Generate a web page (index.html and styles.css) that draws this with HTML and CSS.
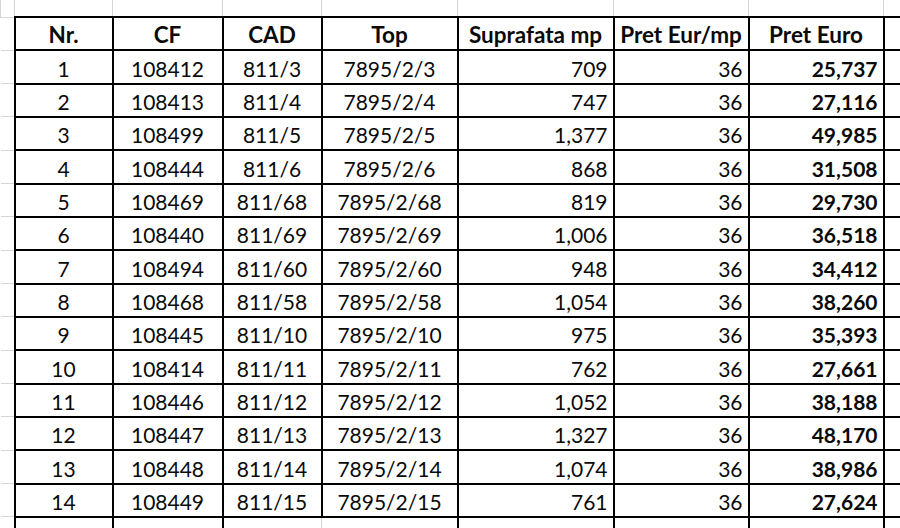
FILE: index.html
```html
<!DOCTYPE html>
<html>
<head>
<meta charset="utf-8">
<link rel="stylesheet" href="styles.css">
</head>
<body>
<table class="sheet">
  <colgroup>
    <col class="c-stub"><col class="c-nr"><col class="c-cf"><col class="c-cad"><col class="c-top"><col class="c-sup"><col class="c-pm"><col class="c-pe"><col class="c-rest">
  </colgroup>
  <tr class="r-top"><td></td><td></td><td></td><td></td><td></td><td></td><td></td><td></td><td></td></tr>
  <tr class="r-head">
    <td class="stub"></td>
    <th>Nr.</th><th>CF</th><th>CAD</th><th>Top</th><th>Suprafata mp</th><th>Pret Eur/mp</th><th>Pret Euro</th>
    <td class="rest"></td>
  </tr>
  <tr><td class="stub"></td><td class="ctr">1</td><td class="ctr">108412</td><td class="ctr">811/3</td><td class="ctr">7895/2/3</td><td class="num">709</td><td class="num">36</td><td class="num b">25,737</td><td class="rest"></td></tr>
  <tr><td class="stub"></td><td class="ctr">2</td><td class="ctr">108413</td><td class="ctr">811/4</td><td class="ctr">7895/2/4</td><td class="num">747</td><td class="num">36</td><td class="num b">27,116</td><td class="rest"></td></tr>
  <tr><td class="stub"></td><td class="ctr">3</td><td class="ctr">108499</td><td class="ctr">811/5</td><td class="ctr">7895/2/5</td><td class="num">1,377</td><td class="num">36</td><td class="num b">49,985</td><td class="rest"></td></tr>
  <tr><td class="stub"></td><td class="ctr">4</td><td class="ctr">108444</td><td class="ctr">811/6</td><td class="ctr">7895/2/6</td><td class="num">868</td><td class="num">36</td><td class="num b">31,508</td><td class="rest"></td></tr>
  <tr><td class="stub"></td><td class="ctr">5</td><td class="ctr">108469</td><td class="ctr">811/68</td><td class="ctr">7895/2/68</td><td class="num">819</td><td class="num">36</td><td class="num b">29,730</td><td class="rest"></td></tr>
  <tr><td class="stub"></td><td class="ctr">6</td><td class="ctr">108440</td><td class="ctr">811/69</td><td class="ctr">7895/2/69</td><td class="num">1,006</td><td class="num">36</td><td class="num b">36,518</td><td class="rest"></td></tr>
  <tr><td class="stub"></td><td class="ctr">7</td><td class="ctr">108494</td><td class="ctr">811/60</td><td class="ctr">7895/2/60</td><td class="num">948</td><td class="num">36</td><td class="num b">34,412</td><td class="rest"></td></tr>
  <tr><td class="stub"></td><td class="ctr">8</td><td class="ctr">108468</td><td class="ctr">811/58</td><td class="ctr">7895/2/58</td><td class="num">1,054</td><td class="num">36</td><td class="num b">38,260</td><td class="rest"></td></tr>
  <tr><td class="stub"></td><td class="ctr">9</td><td class="ctr">108445</td><td class="ctr">811/10</td><td class="ctr">7895/2/10</td><td class="num">975</td><td class="num">36</td><td class="num b">35,393</td><td class="rest"></td></tr>
  <tr><td class="stub"></td><td class="ctr">10</td><td class="ctr">108414</td><td class="ctr">811/11</td><td class="ctr">7895/2/11</td><td class="num">762</td><td class="num">36</td><td class="num b">27,661</td><td class="rest"></td></tr>
  <tr><td class="stub"></td><td class="ctr">11</td><td class="ctr">108446</td><td class="ctr">811/12</td><td class="ctr">7895/2/12</td><td class="num">1,052</td><td class="num">36</td><td class="num b">38,188</td><td class="rest"></td></tr>
  <tr><td class="stub"></td><td class="ctr">12</td><td class="ctr">108447</td><td class="ctr">811/13</td><td class="ctr">7895/2/13</td><td class="num">1,327</td><td class="num">36</td><td class="num b">48,170</td><td class="rest"></td></tr>
  <tr><td class="stub"></td><td class="ctr">13</td><td class="ctr">108448</td><td class="ctr">811/14</td><td class="ctr">7895/2/14</td><td class="num">1,074</td><td class="num">36</td><td class="num b">38,986</td><td class="rest"></td></tr>
  <tr><td class="stub"></td><td class="ctr">14</td><td class="ctr">108449</td><td class="ctr">811/15</td><td class="ctr">7895/2/15</td><td class="num">761</td><td class="num">36</td><td class="num b">27,624</td><td class="rest"></td></tr>
  <tr class="r-bottom"><td class="stub"></td><td class="edge"></td><td class="edge"></td><td></td><td></td><td class="edge"></td><td class="edge"></td><td class="edge"></td><td class="rest"></td></tr>
</table>
</body>
</html>
```
FILE: styles.css
```css
html, body {
  margin: 0;
  padding: 0;
  background: #ffffff;
  overflow: hidden;
}

.sheet {
  border-collapse: collapse;
  table-layout: fixed;
  width: 900px;
  font-family: Lato, "Open Sans", sans-serif;
  font-size: 21px;
  color: #0a0a0a;
}

.c-stub { width: 14px; }
.c-nr { width: 98px; }
.c-cf { width: 110px; }
.c-cad { width: 99px; }
.c-top { width: 136px; }
.c-sup { width: 156px; }
.c-pm { width: 135px; }
.c-pe { width: 135px; }
.c-rest { width: 17px; }

.sheet td, .sheet th {
  border: 1px solid #d6d6d6;
  padding: 0 5px 2px;
  line-height: 24px;
  vertical-align: bottom;
  white-space: nowrap;
  overflow: hidden;
}

.sheet tr { height: 33.33px; }
.sheet tr.r-top { height: 17px; }
.sheet tr.r-bottom { height: 11px; }

.r-top td { border-top: none; }
.r-bottom td { border-bottom: none; }
.sheet td.stub { border-left: none; }
.sheet td.rest { border-right: none; }

.sheet th {
  font-weight: 700;
  font-size: 22.5px;
  text-align: center;
  padding: 0 3px 2px;
  border: 2px solid #000000;
}

.sheet td.ctr, .sheet td.num {
  border: 2px solid #000000;
}

.ctr { text-align: center; }
.num { text-align: right; }
.b { font-weight: 700; }

.sheet td.rest {
  border-top: 2px solid #000000;
  border-bottom: 2px solid #000000;
}
.r-top td.rest, .r-bottom td.rest { border-top: none; border-bottom: none; }
.r-head td.rest { border-top: 2px solid #000000; }

.sheet td.edge {
  border-left: 2px solid #000000;
  border-right: 2px solid #000000;
  border-top: 2px solid #000000;
}
```
